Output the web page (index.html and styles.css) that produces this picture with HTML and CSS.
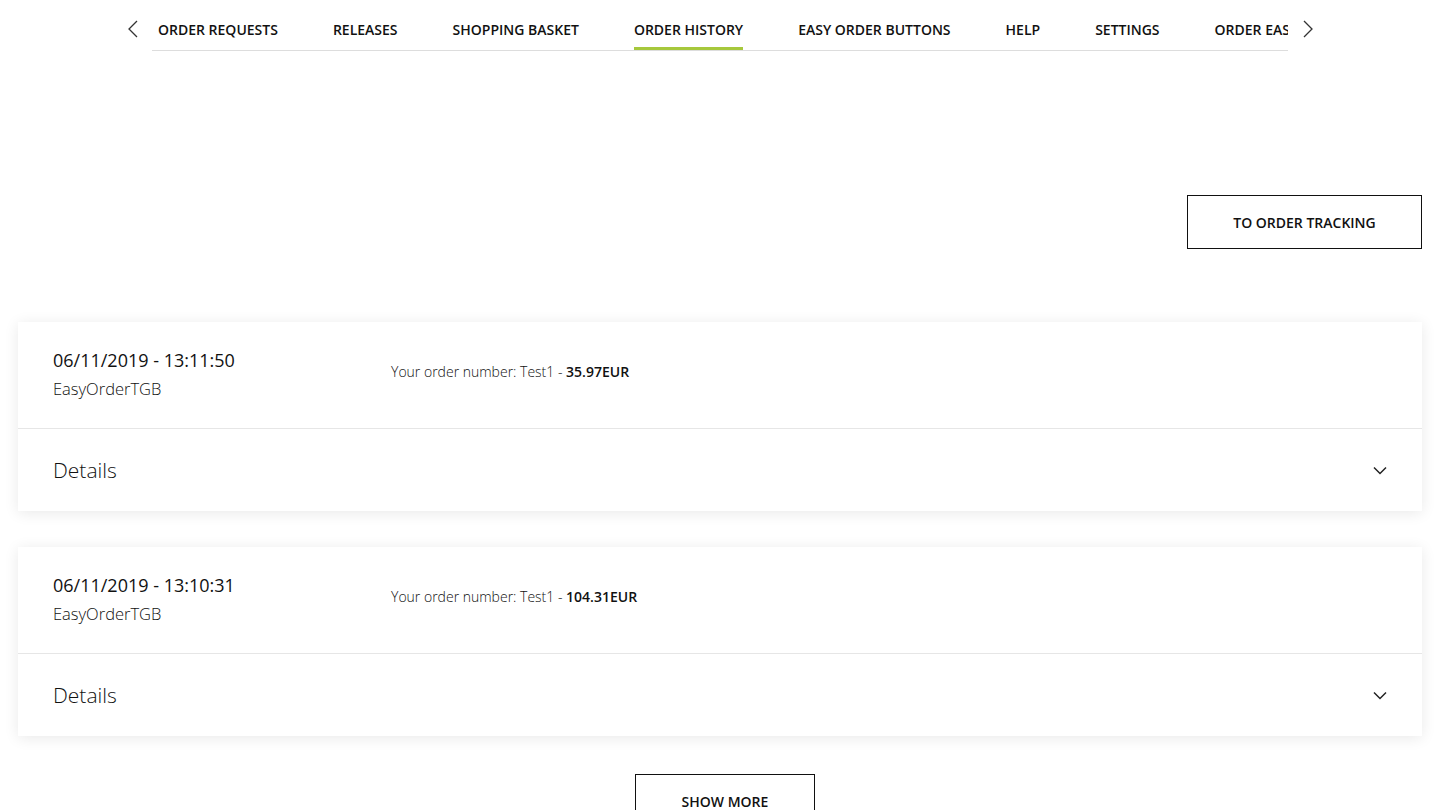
FILE: index.html
```html
<!DOCTYPE html>
<html lang="en">
<head>
    <meta charset="UTF-8">
    <meta name="viewport" content="width=device-width, initial-scale=1.0">
    <title>Order History</title>
    <link rel="stylesheet" href="styles.css">
</head>
<body>

<header class="tabs">
    <button class="tabs-arrow" aria-label="Previous">
        <svg width="12" height="18" viewBox="0 0 12 18"><path d="M10 1 L2 9 L10 17" fill="none" stroke="#333" stroke-width="1.3"/></svg>
    </button>
    <nav class="tabs-list">
        <a href="#">ORDER REQUESTS</a>
        <a href="#">RELEASES</a>
        <a href="#">SHOPPING BASKET</a>
        <a href="#" class="active">ORDER HISTORY</a>
        <a href="#">EASY ORDER BUTTONS</a>
        <a href="#">HELP</a>
        <a href="#">SETTINGS</a>
        <a href="#">ORDER EASY</a>
    </nav>
    <button class="tabs-arrow" aria-label="Next">
        <svg width="12" height="18" viewBox="0 0 12 18"><path d="M2 1 L10 9 L2 17" fill="none" stroke="#333" stroke-width="1.3"/></svg>
    </button>
</header>

<main class="content">
    <div class="toolbar">
        <a href="#" class="btn">TO ORDER TRACKING</a>
    </div>

    <section class="order">
        <div class="order-head">
            <div class="order-meta">
                <div class="order-date">06/11/2019 - 13:11:50</div>
                <div class="order-user">EasyOrderTGB</div>
            </div>
            <div class="order-number">Your order number: Test1 - <strong>35.97EUR</strong></div>
        </div>
        <div class="order-details">
            <span>Details</span>
            <svg width="14" height="9" viewBox="0 0 14 9"><path d="M1 1.5 L7 7.5 L13 1.5" fill="none" stroke="#222" stroke-width="1.5"/></svg>
        </div>
    </section>

    <section class="order">
        <div class="order-head">
            <div class="order-meta">
                <div class="order-date">06/11/2019 - 13:10:31</div>
                <div class="order-user">EasyOrderTGB</div>
            </div>
            <div class="order-number">Your order number: Test1 - <strong>104.31EUR</strong></div>
        </div>
        <div class="order-details">
            <span>Details</span>
            <svg width="14" height="9" viewBox="0 0 14 9"><path d="M1 1.5 L7 7.5 L13 1.5" fill="none" stroke="#222" stroke-width="1.5"/></svg>
        </div>
    </section>

    <div class="more">
        <a href="#" class="btn btn-more">SHOW MORE</a>
    </div>
</main>

</body>
</html>
```

FILE: styles.css
```css
body {
    font-family: "Open Sans", "Noto Sans", sans-serif;
    margin: 0;
    padding: 0;
    color: #111;
    background: #fff;
}
.tabs {
    display: flex;
    align-items: flex-start;
    padding: 0 0 0 113px;
    height: 51px;
}
.tabs-arrow {
    border: 0;
    background: none;
    padding: 0;
    width: 39px;
    height: 58px;
    display: flex;
    align-items: center;
    justify-content: center;
}
.tabs-list {
    display: flex;
    gap: 55px;
    width: 1130px;
    padding-left: 6px;
    overflow: hidden;
    white-space: nowrap;
    border-bottom: 1px solid #ddd;
    height: 50px;
}
.tabs-list a {
    color: #111;
    text-decoration: none;
    font-size: 14px;
    font-weight: 600;
    line-height: 20px;
    padding-top: 20px;
    height: 27px;
    border-bottom: 3px solid transparent;
}
.tabs-list a.active {
    border-bottom-color: #a6c83c;
}
.content {
    padding: 0 18px;
}
.toolbar {
    display: flex;
    justify-content: flex-end;
    padding-top: 144px;
    margin-bottom: 73px;
}
.btn {
    display: inline-flex;
    align-items: center;
    justify-content: center;
    border: 1.5px solid #111;
    color: #111;
    text-decoration: none;
    font-size: 14px;
    font-weight: 600;
    width: 233px;
    height: 52px;
}
.order {
    background: #fff;
    box-shadow: 0 2px 14px rgba(0, 0, 0, 0.09);
    margin-bottom: 36px;
}
.order-head {
    display: flex;
    align-items: center;
    height: 106px;
    padding: 0 35px;
    border-bottom: 1px solid #e6e6e6;
}
.order-meta {
    width: 338px;
    margin-top: -2px;
}
.order-date {
    font-size: 18px;
    line-height: 29px;
}
.order-user {
    font-size: 16.5px;
    line-height: 28px;
    font-weight: 300;
}
.order-number {
    font-size: 14px;
    font-weight: 300;
    margin-top: -8px;
}
.order-number strong {
    font-weight: 600;
}
.order-details {
    display: flex;
    align-items: center;
    justify-content: space-between;
    height: 82px;
    padding: 0 35px;
    font-size: 21px;
    font-weight: 300;
}
.more {
    display: flex;
    justify-content: center;
    padding-left: 10px;
    padding-top: 2px;
}
.btn-more {
    width: 180px;
    height: 52px;
    align-items: flex-start;
    padding-top: 17px;
    box-sizing: border-box;
}
```
